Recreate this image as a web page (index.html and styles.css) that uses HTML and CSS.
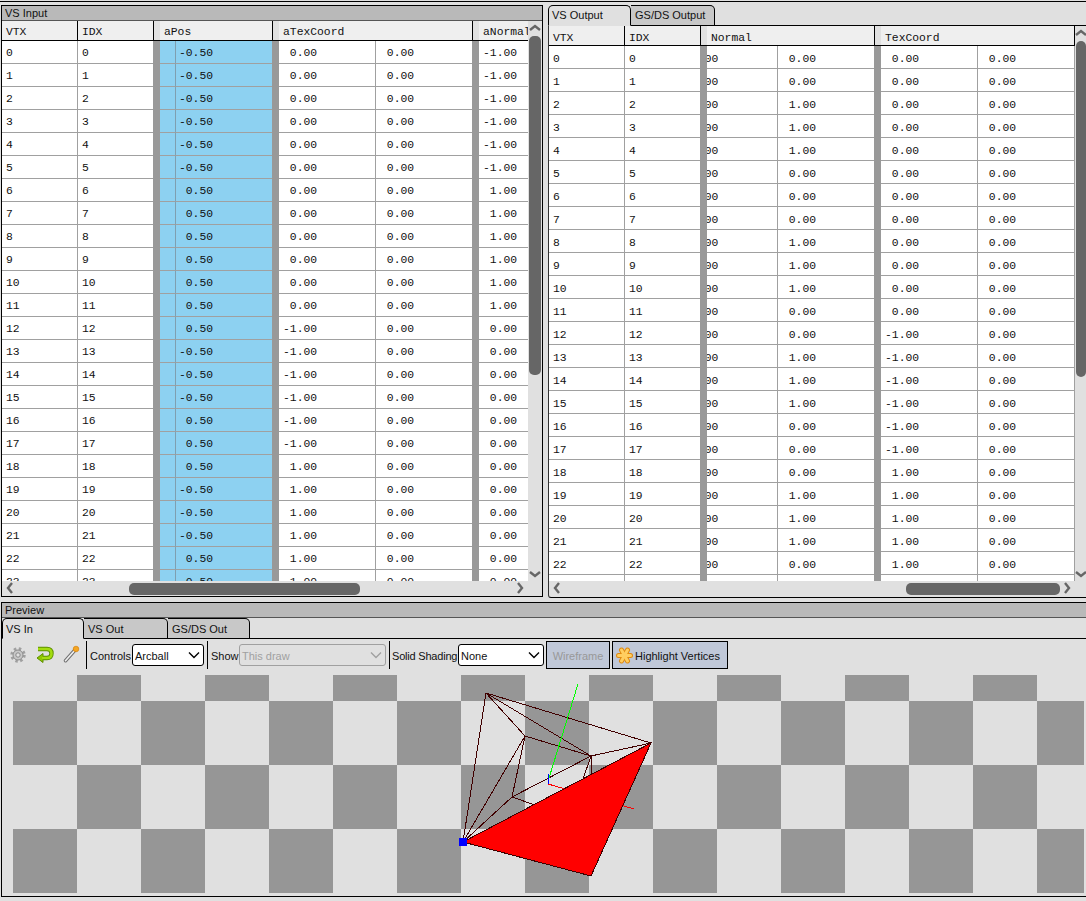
FILE: index.html
```html
<!DOCTYPE html>
<html lang="en">
<head>
<meta charset="utf-8">
<title>Mesh Viewer</title>
<link rel="stylesheet" href="styles.css">
</head>
<body>
<div class="top">
  <section class="panel vsin">
    <div class="title">VS Input</div>
    <div class="grid-wrap">
      <div class="view">
        <table class="data t-in">
          <colgroup><col class="c76"><col class="c75"><col class="c7"><col class="c16"><col class="c96"><col class="c7"><col class="c97"><col class="c96"><col class="c7"><col class="c60"></colgroup>
          <thead><tr><th>VTX</th><th>IDX</th><th class="gut"></th><th colspan="2">aPos</th><th class="gut"></th><th colspan="2">aTexCoord</th><th class="gut"></th><th>aNormal</th></tr></thead>
          <tbody>
<tr><td>0<td>0<td><td><td>-0.50<td><td> 0.00<td> 0.00<td><td>-1.00</tr>
<tr><td>1<td>1<td><td><td>-0.50<td><td> 0.00<td> 0.00<td><td>-1.00</tr>
<tr><td>2<td>2<td><td><td>-0.50<td><td> 0.00<td> 0.00<td><td>-1.00</tr>
<tr><td>3<td>3<td><td><td>-0.50<td><td> 0.00<td> 0.00<td><td>-1.00</tr>
<tr><td>4<td>4<td><td><td>-0.50<td><td> 0.00<td> 0.00<td><td>-1.00</tr>
<tr><td>5<td>5<td><td><td>-0.50<td><td> 0.00<td> 0.00<td><td>-1.00</tr>
<tr><td>6<td>6<td><td><td> 0.50<td><td> 0.00<td> 0.00<td><td> 1.00</tr>
<tr><td>7<td>7<td><td><td> 0.50<td><td> 0.00<td> 0.00<td><td> 1.00</tr>
<tr><td>8<td>8<td><td><td> 0.50<td><td> 0.00<td> 0.00<td><td> 1.00</tr>
<tr><td>9<td>9<td><td><td> 0.50<td><td> 0.00<td> 0.00<td><td> 1.00</tr>
<tr><td>10<td>10<td><td><td> 0.50<td><td> 0.00<td> 0.00<td><td> 1.00</tr>
<tr><td>11<td>11<td><td><td> 0.50<td><td> 0.00<td> 0.00<td><td> 1.00</tr>
<tr><td>12<td>12<td><td><td> 0.50<td><td>-1.00<td> 0.00<td><td> 0.00</tr>
<tr><td>13<td>13<td><td><td>-0.50<td><td>-1.00<td> 0.00<td><td> 0.00</tr>
<tr><td>14<td>14<td><td><td>-0.50<td><td>-1.00<td> 0.00<td><td> 0.00</tr>
<tr><td>15<td>15<td><td><td>-0.50<td><td>-1.00<td> 0.00<td><td> 0.00</tr>
<tr><td>16<td>16<td><td><td> 0.50<td><td>-1.00<td> 0.00<td><td> 0.00</tr>
<tr><td>17<td>17<td><td><td> 0.50<td><td>-1.00<td> 0.00<td><td> 0.00</tr>
<tr><td>18<td>18<td><td><td> 0.50<td><td> 1.00<td> 0.00<td><td> 0.00</tr>
<tr><td>19<td>19<td><td><td>-0.50<td><td> 1.00<td> 0.00<td><td> 0.00</tr>
<tr><td>20<td>20<td><td><td>-0.50<td><td> 1.00<td> 0.00<td><td> 0.00</tr>
<tr><td>21<td>21<td><td><td>-0.50<td><td> 1.00<td> 0.00<td><td> 0.00</tr>
<tr><td>22<td>22<td><td><td> 0.50<td><td> 1.00<td> 0.00<td><td> 0.00</tr>
<tr><td>23<td>23<td><td><td> 0.50<td><td> 1.00<td> 0.00<td><td> 0.00</tr>
          </tbody>
        </table>
      </div>
      <div class="vbar vbar-in">
        <svg class="chev" width="12" height="8" viewBox="0 0 12 8"><polyline points="1,6 6,2 11,6"/></svg>
        <div class="vthumb vthumb-in"></div>
        <svg class="chev chev-end" width="12" height="8" viewBox="0 0 12 8"><polyline points="1,2 6,6 11,2"/></svg>
      </div>
      <div class="hbar">
        <svg class="chev" width="8" height="12" viewBox="0 0 8 12"><polyline points="6,1 2,6 6,11"/></svg>
        <div class="hthumb hthumb-in"></div>
        <svg class="chev chev-right" width="8" height="12" viewBox="0 0 8 12"><polyline points="2,1 6,6 2,11"/></svg>
      </div>
    </div>
  </section>

  <section class="vsout">
    <div class="tabs">
      <div class="tab active w83">VS Output</div>
      <div class="tab w84">GS/DS Output</div>
    </div>
    <div class="grid-wrap out-wrap">
      <div class="view view-out">
        <table class="data t-out">
          <colgroup><col class="c76"><col class="c75"><col class="c7"><col class="c71"><col class="c96"><col class="c7"><col class="c97"><col class="c97"></colgroup>
          <thead><tr><th>VTX</th><th>IDX</th><th class="gut"></th><th colspan="2">Normal</th><th class="gut"></th><th colspan="2" class="last">TexCoord</th></tr></thead>
          <tbody>
<tr><td>0<td>0<td><td> 0.00<td> 0.00<td><td> 0.00<td> 0.00</tr>
<tr><td>1<td>1<td><td> 0.00<td> 0.00<td><td> 0.00<td> 0.00</tr>
<tr><td>2<td>2<td><td> 0.00<td> 1.00<td><td> 0.00<td> 0.00</tr>
<tr><td>3<td>3<td><td> 0.00<td> 1.00<td><td> 0.00<td> 0.00</tr>
<tr><td>4<td>4<td><td> 0.00<td> 1.00<td><td> 0.00<td> 0.00</tr>
<tr><td>5<td>5<td><td> 0.00<td> 0.00<td><td> 0.00<td> 0.00</tr>
<tr><td>6<td>6<td><td> 0.00<td> 0.00<td><td> 0.00<td> 0.00</tr>
<tr><td>7<td>7<td><td> 0.00<td> 0.00<td><td> 0.00<td> 0.00</tr>
<tr><td>8<td>8<td><td> 0.00<td> 1.00<td><td> 0.00<td> 0.00</tr>
<tr><td>9<td>9<td><td> 0.00<td> 1.00<td><td> 0.00<td> 0.00</tr>
<tr><td>10<td>10<td><td> 0.00<td> 1.00<td><td> 0.00<td> 0.00</tr>
<tr><td>11<td>11<td><td> 0.00<td> 0.00<td><td> 0.00<td> 0.00</tr>
<tr><td>12<td>12<td><td> 0.00<td> 0.00<td><td>-1.00<td> 0.00</tr>
<tr><td>13<td>13<td><td> 0.00<td> 1.00<td><td>-1.00<td> 0.00</tr>
<tr><td>14<td>14<td><td> 0.00<td> 1.00<td><td>-1.00<td> 0.00</tr>
<tr><td>15<td>15<td><td> 0.00<td> 1.00<td><td>-1.00<td> 0.00</tr>
<tr><td>16<td>16<td><td> 0.00<td> 0.00<td><td>-1.00<td> 0.00</tr>
<tr><td>17<td>17<td><td> 0.00<td> 0.00<td><td>-1.00<td> 0.00</tr>
<tr><td>18<td>18<td><td> 0.00<td> 0.00<td><td> 1.00<td> 0.00</tr>
<tr><td>19<td>19<td><td> 0.00<td> 1.00<td><td> 1.00<td> 0.00</tr>
<tr><td>20<td>20<td><td> 0.00<td> 1.00<td><td> 1.00<td> 0.00</tr>
<tr><td>21<td>21<td><td> 0.00<td> 1.00<td><td> 1.00<td> 0.00</tr>
<tr><td>22<td>22<td><td> 0.00<td> 0.00<td><td> 1.00<td> 0.00</tr>
<tr><td>23<td>23<td><td> 0.00<td> 0.00<td><td> 1.00<td> 0.00</tr>
          </tbody>
        </table>
      </div>
      <div class="vbar vbar-out">
        <svg class="chev" width="12" height="8" viewBox="0 0 12 8"><polyline points="1,6 6,2 11,6"/></svg>
        <div class="vthumb vthumb-out"></div>
        <svg class="chev chev-end" width="12" height="8" viewBox="0 0 12 8"><polyline points="1,2 6,6 11,2"/></svg>
      </div>
      <div class="hbar">
        <svg class="chev" width="8" height="12" viewBox="0 0 8 12"><polyline points="6,1 2,6 6,11"/></svg>
        <div class="hthumb hthumb-out"></div>
        <svg class="chev chev-right" width="8" height="12" viewBox="0 0 8 12"><polyline points="2,1 6,6 2,11"/></svg>
      </div>
    </div>
  </section>
</div>

<section class="preview">
  <div class="title">Preview</div>
  <div class="tabs">
    <div class="tab active w82">VS In</div>
    <div class="tab w84">VS Out</div>
    <div class="tab w82">GS/DS Out</div>
  </div>
  <div class="toolbar">
    <svg class="tool" width="20" height="20" viewBox="0 0 20 20">
      <circle cx="10" cy="10" r="6.4" fill="none" stroke="#a0a0a0" stroke-width="2.6" stroke-dasharray="2.5 2.53"/>
      <circle cx="10" cy="10" r="5" fill="#c8c8c8" stroke="#8a8a8a"/>
      <circle cx="10" cy="10" r="2.2" fill="#e0e0e0" stroke="#8a8a8a"/>
    </svg>
    <svg class="tool" width="20" height="20" viewBox="0 0 20 20">
      <path d="M4 4 H13 Q17.500 4 17.500 8.500 Q17.500 13 13 13 H8" fill="none" stroke="#5d8f00" stroke-width="4.4"/>
      <path d="M3 13 L9 8.500 V17.500 Z" fill="#8fc800" stroke="#5d8f00"/>
      <path d="M4 4 H13 Q17.500 4 17.500 8.500 Q17.500 13 13 13 H8" fill="none" stroke="#a4dc10" stroke-width="2.6"/>
    </svg>
    <svg class="tool" width="20" height="20" viewBox="0 0 20 20">
      <line x1="5.500" y1="15.700" x2="15" y2="5" stroke="#707070" stroke-width="3.600" stroke-linecap="round"/>
      <line x1="5.500" y1="15.700" x2="15" y2="5" stroke="#f0f0f0" stroke-width="1.600" stroke-linecap="round"/>
      <circle cx="16" cy="4" r="2.800" fill="#f5a623" stroke="#d07a00" stroke-width=".6"/>
    </svg>
    <div class="sep"></div>
    <span class="label l-controls">Controls</span>
    <div class="combo w72"><span>Arcball</span>
      <svg width="12" height="8" viewBox="0 0 12 8"><polyline points="1,1.500 6,6.500 11,1.500"/></svg>
    </div>
    <div class="sep"></div>
    <span class="label l-show">Show</span>
    <div class="combo off w147"><span>This draw</span>
      <svg width="12" height="8" viewBox="0 0 12 8"><polyline points="1,1.500 6,6.500 11,1.500"/></svg>
    </div>
    <div class="sep"></div>
    <span class="label l-shade">Solid Shading</span>
    <div class="combo w86"><span>None</span>
      <svg width="12" height="8" viewBox="0 0 12 8"><polyline points="1,1.500 6,6.500 11,1.500"/></svg>
    </div>
    <div class="toggle off w64"><span>Wireframe</span></div>
    <div class="toggle w116">
      <svg width="17" height="17" viewBox="0 0 17 17">
        <g stroke="#e08a10" stroke-width="5" stroke-linecap="round"><line x1="2.500" y1="8.500" x2="14.500" y2="8.500"/><line x1="5.500" y1="3" x2="11.500" y2="14"/><line x1="11.500" y1="3" x2="5.500" y2="14"/></g>
        <g stroke="#ffce60" stroke-width="3" stroke-linecap="round"><line x1="2.500" y1="8.500" x2="14.500" y2="8.500"/><line x1="5.500" y1="3" x2="11.500" y2="14"/><line x1="11.500" y1="3" x2="5.500" y2="14"/></g>
      </svg>
      <span>Highlight Vertices</span>
    </div>
  </div>
  <svg class="canvas" width="1071" height="218" viewBox="0 0 1071 218">
    <defs>
      <pattern id="check" width="128" height="128" x="0" y="-38" patternUnits="userSpaceOnUse">
        <rect width="128" height="128" fill="#e0e0e0"/>
        <rect x="64" y="0" width="64" height="64" fill="#969696"/>
        <rect x="0" y="64" width="64" height="64" fill="#969696"/>
      </pattern>
    </defs>
    <rect width="1071" height="218" fill="url(#check)"/>
    <g transform="translate(-13 -675)" shape-rendering="crispEdges">
      <g stroke="#400000" fill="none">
        <path d="M463 842 L486 693 L651 743 M463 842 L525 736 M463 842 L512 797 M486 693 L525 736 L591 756 L651 743 M486 693 L591 756 M525 736 L512 797 L591 756 L591 780 M591 756 L582 782 M512 797 L535 805"/>
      </g>
      <line x1="549" y1="778" x2="578" y2="684" stroke="#00ff00"/>
      <line x1="549" y1="774" x2="548" y2="784" stroke="#0000ff"/>
      <path d="M548 784 L634 809" stroke="#ff0000" fill="none"/>
      <polygon points="463,842 651,743 591,876" fill="#ff0000" stroke="#400000"/>
      <rect x="459" y="838" width="8" height="8" fill="#0000ff"/>
    </g>
  </svg>
</section>
</body>
</html>
```
FILE: styles.css
```css
* { box-sizing: border-box; }
html, body { margin: 0; padding: 0; }
body {
  width: 1086px;
  height: 901px;
  overflow: hidden;
  background: #e0e0e0;
  color: #111;
  font: 11px "Liberation Sans", sans-serif;
  white-space: nowrap;
}
.top {
  display: flex;
  margin-top: 1px;
  padding-top: 3px;
  border-top: 1px solid #000;
  height: 597px;
}
.panel.vsin {
  width: 542px;
  height: 592px;
  margin: 0 0 0 1px;
  border: 1px solid #000;
  display: flex;
  flex-direction: column;
}
.title {
  height: 15px;
  line-height: 14px;
  padding-left: 3px;
  background: #b9b9b9;
  border-bottom: 1px solid #555;
  flex: none;
}
.grid-wrap {
  display: grid;
  grid-template-columns: 526px 14px;
  grid-template-rows: 560px 14px;
  flex: 1;
}
.view { overflow: hidden; background: #fff; }
.data {
  table-layout: fixed;
  border-collapse: separate;
  border-spacing: 0;
  font: 11.35px "Liberation Mono", monospace;
  white-space: pre;
}
.t-in { width: 537px; }
.t-out { width: 526px; }
.c76 { width: 76px; } .c75 { width: 75px; } .c7 { width: 7px; }
.c16 { width: 16px; } .c96 { width: 96px; } .c97 { width: 97px; }
.c60 { width: 60px; } .c71 { width: 71px; }
th {
  height: 20px;
  padding: 3px 0 0 4px;
  background: #efefef;
  border-bottom: 1px solid #000;
  font-weight: normal;
  text-align: left;
  overflow: hidden;
}
th:first-child { border-right: 1px solid #000; }
th.gut { background: #e0e0e0; border-left: 1px solid #000; padding: 0; }
th.last { border-right: 1px solid #000; }
.t-out th { padding-top: 5px; }
.t-out th.gut { padding-top: 0; }
td {
  height: 23px;
  padding: 2px 0 0 4px;
  background: #fff;
  border-bottom: 1px solid #a0a0a0;
  overflow: hidden;
}
.t-out td { padding-top: 4px; }
td:nth-child(1) { border-right: 1px solid #a0a0a0; }
td:nth-child(3), .t-in td:nth-child(6), .t-in td:nth-child(9), .t-out td:nth-child(6) {
  background: #999;
  border-bottom: 0;
  padding: 0;
}
.t-in td:nth-child(7), .t-out td:nth-child(7), .t-out td:nth-child(4) { border-right: 1px solid #a0a0a0; }
.t-in td:nth-child(4), .t-in td:nth-child(5) { background: #8dd1f1; }
.t-in td:nth-child(4) { border-right: 1px solid #7f9fb0; padding: 0; }
.t-in td:nth-child(5) { padding-left: 3px; }
.t-out td:nth-child(4) { text-indent: -26.800px; }
.t-out td:last-child { border-right: 1px solid #a0a0a0; }

.vbar { display: flex; flex-direction: column; align-items: center; background: #e0e0e0; }
.vbar-in { width: 14px; padding-top: 3px; }
.vbar-out { width: 11px; padding-top: 3px; }
.vthumb { background: #666; border-radius: 5px; }
.vthumb-in { width: 12px; height: 339px; margin-top: 4px; }
.vthumb-out { width: 10px; height: 336px; margin-top: 4px; margin-left: 1px; }
.chev { fill: none; stroke: #666; stroke-width: 2.4; flex: none; }
.chev-end { margin-top: auto; margin-bottom: 3px; }
.hbar {
  grid-column: 1 / 2;
  display: flex;
  align-items: center;
  background: #e0e0e0;
  padding: 0 4px;
}
.hthumb { height: 12px; background: #666; border-radius: 5px; margin-top: 1px; }
.hthumb-in { width: 231px; margin-left: 115px; }
.hthumb-out { width: 154px; margin-left: 345px; }
.chev-right { margin-left: auto; }

.vsout { margin-left: 5px; flex: 1; display: flex; flex-direction: column; height: 593px; }
.out-wrap {
  grid-template-columns: 526px 11px;
  grid-template-rows: 555px 14px;
  border-left: 1px solid #333;
  border-bottom: 1px solid #000;
  border-bottom-left-radius: 3px;
}
.tabs { display: flex; height: 21px; border-bottom: 1px solid #000; flex: none; }
.tab {
  height: 21px;
  line-height: 19px;
  padding-left: 4px;
  background: #c8c8c8;
  border: 1px solid #000;
  border-left: 0;
  border-radius: 0 5px 0 0;
}
.tab.active { background: #e0e0e0; border-bottom-color: #e0e0e0; border-left: 1px solid #000; border-radius: 5px 5px 0 0; padding-left: 3px; }
.preview .tab { line-height: 21px; }
.w83 { width: 83px; } .w84 { width: 84px; } .w82 { width: 82px; }

.preview {
  height: 295px;
  margin: 4px 0 0 1px;
  border: 1px solid #000;
  border-right: 0;
  display: flex;
  flex-direction: column;
}
.toolbar {
  display: flex;
  align-items: center;
  height: 36px;
  padding: 2px 0 6px 6px;
  flex: none;
}
.tool { flex: none; margin-right: 6px; }
.sep { width: 1px; height: 28px; background: #000; flex: none; }
.label { flex: none; margin: 0 3px; padding-top: 1px; }
.combo span, .toggle span { padding-top: 1px; }
.l-controls { width: 39px; }
.l-show { width: 25px; }
.l-shade { width: 63px; margin-left: 2px; letter-spacing: -.2px; }
.combo {
  flex: none;
  display: flex;
  align-items: center;
  justify-content: space-between;
  height: 22px;
  padding: 0 3px 0 2px;
  background: #fff;
  border: 1px solid #000;
  border-radius: 3px;
  margin-right: 3px;
}
.combo svg { fill: none; stroke: #000; stroke-width: 1.400; }
.combo.off { background: #e0e0e0; border-color: #a0a0a0; color: #a0a0a0; }
.combo.off svg { stroke: #a0a0a0; }
.w72 { width: 72px; } .w147 { width: 147px; } .w86 { width: 86px; }
.toggle {
  flex: none;
  display: flex;
  align-items: center;
  gap: 2px;
  height: 28px;
  margin-left: 2px;
  padding-left: 3px;
  background: #c0c8d8;
  border: 1px solid #000;
}
.toggle.off { color: #989898; margin-left: -1px; justify-content: center; padding-left: 0; }
.w64 { width: 64px; } .w116 { width: 116px; }
.canvas { display: block; margin-left: 11px; flex: none; }
```
